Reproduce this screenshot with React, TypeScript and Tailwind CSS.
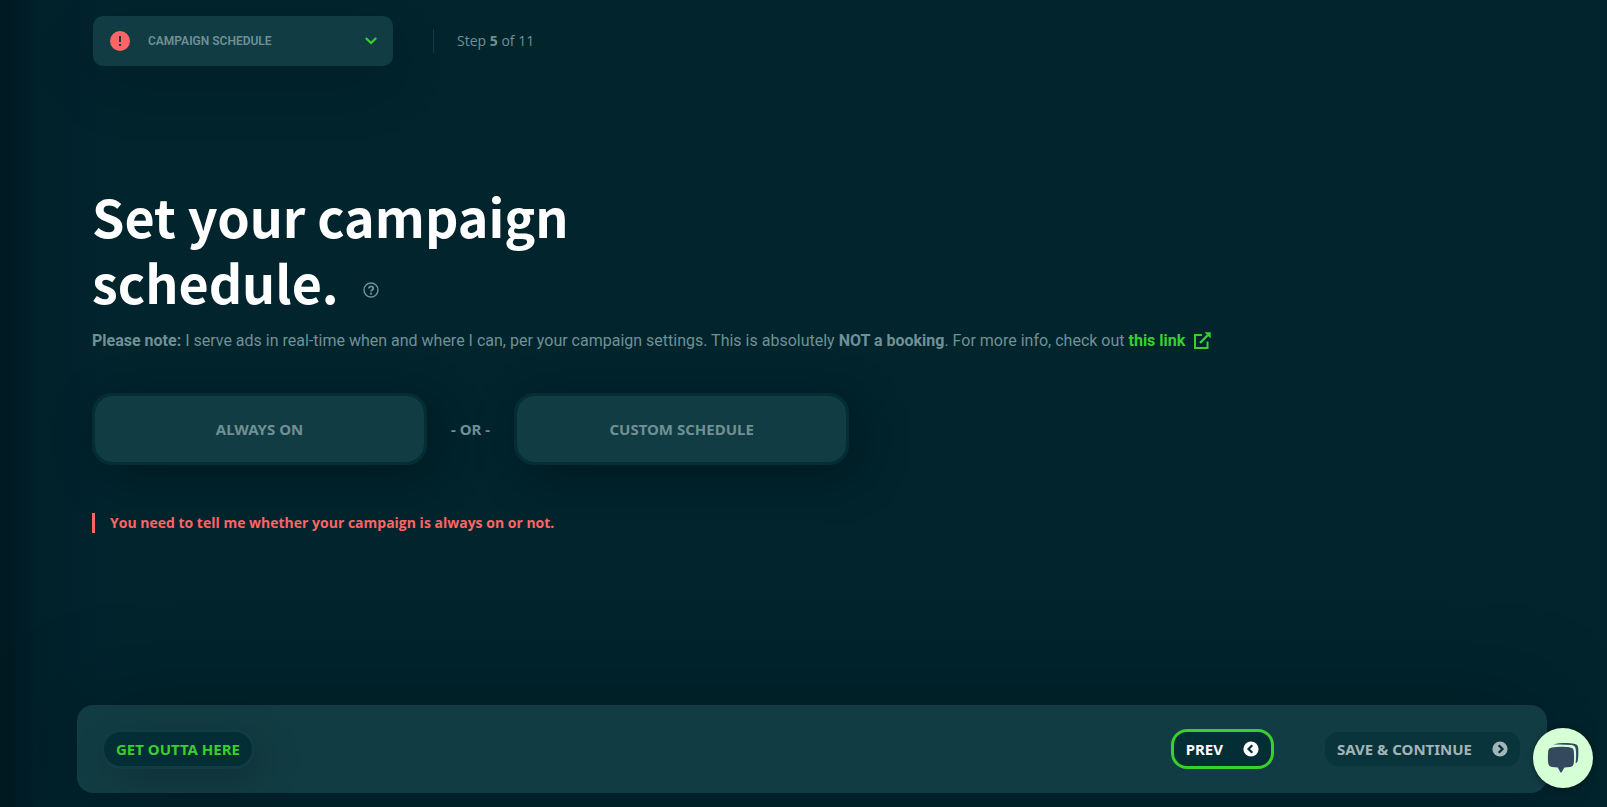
import React from "react";

function AlertIcon() {
  return (
    <svg viewBox="0 0 20 20" className="size-5 shrink-0" aria-hidden="true">
      <circle cx="10" cy="10" r="10" fill="#ff6467" />
      <rect x="9" y="5" width="2" height="6" fill="#123c43" />
      <rect x="9" y="13" width="2" height="2" fill="#123c43" />
    </svg>
  );
}

function ChevronDownIcon() {
  return (
    <svg viewBox="0 0 12 8" className="h-2 w-3 shrink-0" fill="none" stroke="#37d02c" strokeWidth="2.3" aria-hidden="true">
      <path d="M0.8 1 L6 6 L11.2 1" />
    </svg>
  );
}

function HelpIcon() {
  return (
    <svg viewBox="0 0 16 16" className="size-4" fill="none" stroke="currentColor" aria-hidden="true">
      <circle cx="8" cy="8" r="7" strokeWidth="1.4" />
      <path d="M5.9 6.5 C5.9 3.7 10.2 3.9 10.2 6.4 C10.2 8 8 7.9 8 9.6" strokeWidth="1.8" />
      <circle cx="8" cy="11.7" r="1.1" fill="currentColor" stroke="none" />
    </svg>
  );
}

function ExternalIcon() {
  return (
    <svg viewBox="0 0 18 18" className="size-[18px]" fill="none" stroke="currentColor" strokeWidth="2" aria-hidden="true">
      <path d="M9 3 H2 V16 H14.5 V9.5" />
      <path d="M7 11 L15.5 2.5" strokeWidth="2.4" />
      <path d="M11.5 0.3 H17.7 V6.5 Z" fill="currentColor" stroke="none" />
    </svg>
  );
}

function CircleArrow({ direction }: { direction: "left" | "right" }) {
  return (
    <svg viewBox="0 0 16 16" className="size-4" aria-hidden="true">
      <circle cx="8" cy="8" r="7.6" fill="currentColor" />
      <path
        d={direction === "left" ? "M9.3 4.2 L5.5 8 L9.3 11.8" : "M6.7 4.2 L10.5 8 L6.7 11.8"}
        fill="none"
        stroke="#032e36"
        strokeWidth="2.2"
      />
    </svg>
  );
}

function ChatIcon() {
  return (
    <svg viewBox="0 0 32 32" className="size-8" fill="#34495e" aria-hidden="true">
      <path d="M6.5 2.5 C12 0.8 22 0.8 27 1.8 C29.8 2.3 31 3.4 31.2 6 C31.6 11 31.4 17 30.6 19.2 C30.2 20.3 29.4 20.8 28.6 21.2 C29.2 17 29.3 11.5 28.8 7.5 C28.4 4.5 27.2 3.4 24.5 3.1 C18.5 2.3 12 2.3 6.5 2.5 Z" />
      <path d="M5 5.4 C10.5 4.6 18 4.6 23.2 5.4 C25.6 5.8 26.6 6.8 26.8 9 C27.2 13 27.2 17.5 26.8 21 C26.5 23.4 25.6 24.6 23.2 25 C21.3 25.3 19.3 25.4 17.4 25.6 L14.8 30 Q14 31 13.2 30 L10.8 25.6 C8.8 25.4 6.9 25.3 5 25 C2.6 24.6 1.5 23.4 1.2 21 C0.8 17.5 0.8 13 1.2 9 C1.5 6.8 2.6 5.8 5 5.4 Z" />
    </svg>
  );
}

function ChoiceButton({ children }: { children: React.ReactNode }) {
  return (
    <button
      type="button"
      className="h-[72px] w-[335px] rounded-[20px] border-3 border-[#032e36] bg-[#123c43] bg-clip-padding text-[15px] font-bold text-[#6f9196] shadow-[10px_10px_50px_rgba(0,0,0,0.3)]"
    >
      {children}
    </button>
  );
}

export default function App() {
  return (
    <div className="flex min-h-screen flex-col overflow-hidden bg-[#01242d] bg-[linear-gradient(to_right,#00181f_0px,#01202a_36px,#01242d_110px)] font-['Noto_Sans',sans-serif] text-[#6f9196]">
      <header className="flex items-center pt-4 pl-[93px]">
        <button
          type="button"
          className="flex h-[50px] w-[300px] items-center rounded-[10px] bg-[#123c43] pr-4 pl-[17px] shadow-[0_20px_60px_rgba(0,0,0,0.14)]"
        >
          <AlertIcon />
          <span className="ml-[18px] grow text-left font-['Roboto',sans-serif] text-xs font-semibold">CAMPAIGN SCHEDULE</span>
          <ChevronDownIcon />
        </button>
        <div className="ml-10 flex h-6 items-center border-l border-[#123c43] pl-[23px] font-['Open_Sans',sans-serif] text-sm">
          <p>
            Step <strong>5</strong> of 11
          </p>
        </div>
      </header>

      <main className="flex grow flex-col items-start px-[92px] pt-[117px]">
        <h1 className="font-['Noto_Sans_CJK_SC',sans-serif] text-[52px] leading-[66px] font-bold text-white">
          Set your campaign
          <br />
          schedule.
          <button type="button" aria-label="Help" className="ml-6 align-middle text-[#6f9196]">
            <HelpIcon />
          </button>
        </h1>
        <p className="mt-3.5 font-['Roboto',sans-serif] text-base leading-6">
          <strong className="font-bold">Please note:</strong> I serve ads in real-time when and where I can, per your
          campaign settings. This is absolutely <strong className="font-bold">NOT a booking</strong>. For more info,
          check out{" "}
          <a href="#info" className="inline-flex items-center gap-2 font-bold text-[#37d02c]">
            this link
            <ExternalIcon />
          </a>
        </p>

        <div className="mt-10 flex items-center gap-6">
          <ChoiceButton>ALWAYS ON</ChoiceButton>
          <span className="text-[15px] font-bold">- OR -</span>
          <ChoiceButton>CUSTOM SCHEDULE</ChoiceButton>
        </div>

        <p role="alert" className="mt-12 border-l-3 border-[#ff6467] pl-[15px] font-['Open_Sans',sans-serif] text-sm leading-5 font-bold text-[#ff6467]">
          You need to tell me whether your campaign is always on or not.
        </p>
      </main>

      <footer className="mr-[60px] mb-3.5 ml-[77px] flex h-[88px] items-center rounded-2xl bg-[#123c43] px-6 text-[15px] font-bold shadow-[0_0_100px_rgba(0,0,0,0.25)]">
        <button
          type="button"
          className="h-10 rounded-[20px] border-3 border-[#123c43] bg-[#032e36] px-3 text-[#37d02c] shadow-[10px_10px_40px_rgba(0,0,0,0.2)]"
        >
          GET OUTTA HERE
        </button>
        <button
          type="button"
          className="ml-auto flex h-10 items-center gap-5 rounded-2xl border-3 border-[#37d02c] bg-[#032e36] px-3 text-white"
        >
          PREV
          <CircleArrow direction="left" />
        </button>
        <button
          type="button"
          className="ml-12 flex h-10 items-center gap-5 rounded-2xl border-3 border-transparent bg-[#09343c] bg-clip-padding px-3 text-[#a3b5b8]"
        >
          SAVE &amp; CONTINUE
          <CircleArrow direction="right" />
        </button>
      </footer>

      <button
        type="button"
        aria-label="Open chat"
        className="fixed right-3.5 bottom-[19px] flex size-[60px] items-center justify-center rounded-full bg-[#d5ffd5] shadow-[0_1px_6px_rgba(0,0,0,0.4)]"
      >
        <ChatIcon />
      </button>
    </div>
  );
}
